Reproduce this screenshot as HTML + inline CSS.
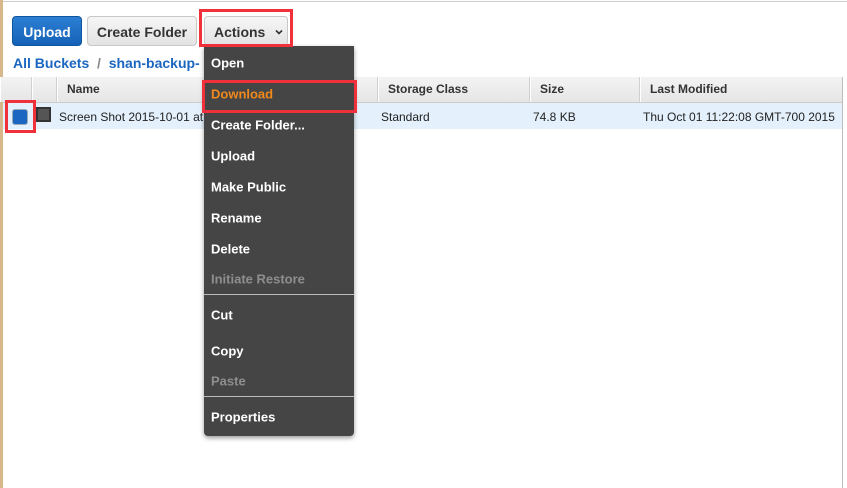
<!DOCTYPE html><html><head><style>
body{margin:0;width:847px;height:488px;background:#fff;font-family:"Liberation Sans",sans-serif;position:relative;overflow:hidden}
.a{position:absolute}
.btn{position:absolute;top:16px;height:30px;border-radius:4px;font-weight:bold;font-size:14px;line-height:30px;text-align:center;box-sizing:border-box}
.g{background:linear-gradient(#f6f6f6,#e3e3e3);border:1px solid #c8c8c8;color:#333}
.mi{position:absolute;left:211px;font-size:13px;font-weight:bold;color:#fff;transform:translateY(-50%)}
.dis{color:#8e8e8e}
.hd{position:absolute;top:77px;height:25px;background:linear-gradient(#f3f3f3,#e6e6e6);border-left:1px solid #fff;border-right:1px solid #d0d0d0;font-size:12px;font-weight:bold;color:#333;line-height:25px;box-sizing:border-box;padding-left:9px}
.c{position:absolute;top:110px;font-size:12px;color:#222}
.red{position:absolute;border:3px solid #f0303a;box-sizing:border-box}
</style></head><body>
<div class="a" style="left:0;top:0;width:3px;height:488px;background:#d8b88a"></div>
<div class="a" style="left:3px;top:1px;width:844px;height:1px;background:#ccc"></div>
<div class="btn" style="left:12px;width:70px;background:linear-gradient(#2c7fd2,#1462b8);border:1px solid #10559f;color:#fff">Upload</div>
<div class="btn g" style="left:87px;width:110px">Create Folder</div>
<div class="btn g" style="left:204px;width:84px;text-align:left;padding-left:9px">Actions<svg style="position:absolute;left:70px;top:12px" width="8" height="6"><path d="M1 1.5L4 4.5L7 1.5" stroke="#333" stroke-width="1.6" fill="none"/></svg></div>
<div class="a" style="left:13px;top:55px;font-size:14px;font-weight:bold;color:#1a66c0">All Buckets &nbsp;<span style="color:#888">/</span>&nbsp; shan-backup-</div>
<div class="hd" style="left:0;width:32px"></div>
<div class="hd" style="left:32px;width:25px"></div>
<div class="hd" style="left:57px;width:321px">Name</div>
<div class="hd" style="left:378px;width:152px">Storage Class</div>
<div class="hd" style="left:530px;width:110px">Size</div>
<div class="hd" style="left:640px;width:203px">Last Modified</div>
<div class="a" style="left:3px;top:102px;width:840px;height:1px;background:#ccc"></div>
<div class="a" style="left:3px;top:103px;width:840px;height:26px;background:#e4f0fb"></div>
<div class="a" style="left:842px;top:77px;width:1px;height:411px;background:#bbb"></div>
<div class="a" style="left:12px;top:109px;width:14px;height:14px;background:#1a66c0;border-radius:3px;border:1px solid #9ab"></div>
<div class="a" style="left:36px;top:107px;width:11px;height:11px;border:2px solid #333;background:#555"></div>
<div class="c" style="left:59px">Screen Shot 2015-10-01 at</div>
<div class="c" style="left:381px">Standard</div>
<div class="c" style="left:533px">74.8 KB</div>
<div class="c" style="left:643px">Thu Oct 01 11:22:08 GMT-700 2015</div>
<div class="a" style="left:204px;top:46px;width:150px;height:390px;background:#454545;border-radius:0 0 4px 4px;box-shadow:0 2px 5px rgba(0,0,0,.4)"></div>
<div class="a" style="left:204px;top:294px;width:150px;height:1px;background:#bbb"></div>
<div class="a" style="left:204px;top:396px;width:150px;height:1px;background:#bbb"></div>
<div class="mi" style="top:63px">Open</div>
<div class="mi" style="top:94px;color:#f08a1c">Download</div>
<div class="mi" style="top:125px">Create Folder...</div>
<div class="mi" style="top:156px">Upload</div>
<div class="mi" style="top:187px">Make Public</div>
<div class="mi" style="top:218px">Rename</div>
<div class="mi" style="top:249px">Delete</div>
<div class="mi dis" style="top:279px">Initiate Restore</div>
<div class="mi" style="top:315px">Cut</div>
<div class="mi" style="top:351px">Copy</div>
<div class="mi dis" style="top:381px">Paste</div>
<div class="mi" style="top:417px">Properties</div>
<div class="red" style="left:199px;top:9px;width:94px;height:38px"></div>
<div class="red" style="left:202px;top:80px;width:155px;height:33px"></div>
<div class="red" style="left:5px;top:100px;width:31px;height:33px"></div>
</body></html>
